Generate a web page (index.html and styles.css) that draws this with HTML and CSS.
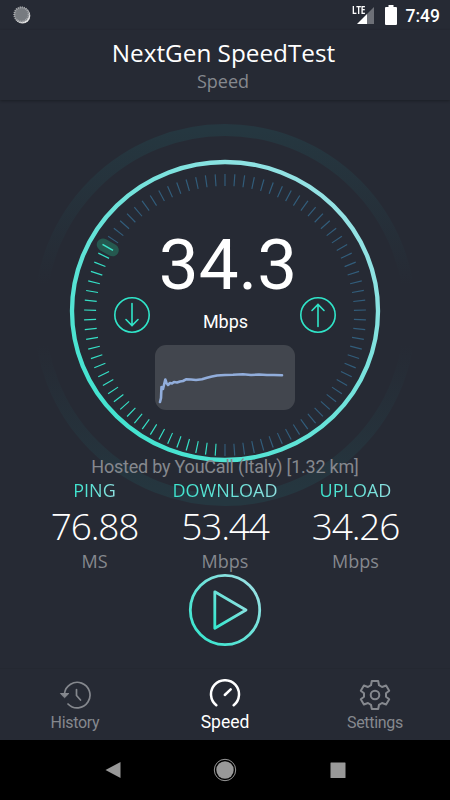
FILE: index.html
```html
<!DOCTYPE html>
<html lang="en">
<head>
    <meta charset="UTF-8">
    <meta name="viewport" content="width=device-width, initial-scale=1.0">
    <title>NextGen SpeedTest</title>
    <link rel="stylesheet" href="styles.css">
</head>
<body>
    <!-- Status bar -->
    <div class="status-bar">
        <svg class="sync" width="18" height="18" viewBox="0 0 18 18">
            <circle cx="9.5" cy="9.7" r="7.8" fill="#e4e4e4"/>
            <circle cx="8.5" cy="8.5" r="7.6" fill="#777b80"/>
            <circle cx="8.5" cy="8.5" r="7.2" fill="none" stroke="#a9abae" stroke-width="2" stroke-dasharray="1 1"/>
        </svg>
        <div class="status-right">
            <div class="signal">
                <span class="lte">LTE</span>
                <svg width="17" height="17" viewBox="0 0 17 17">
                    <path d="M17 0V17H10V7z" fill="#6d7077"/>
                    <path d="M10 7V17H0z" fill="#fff"/>
                </svg>
            </div>
            <svg class="battery" width="12" height="20" viewBox="0 0 12 20">
                <path d="M3.5 0h5v2H11q1 0 1 1v16q0 1-1 1H1q-1 0-1-1V3q0-1 1-1h2.500z" fill="#fff"/>
            </svg>
            <span class="clock">7:49</span>
        </div>
    </div>

    <!-- Title -->
    <header class="header">
        <h1>NextGen SpeedTest</h1>
        <p>Speed</p>
    </header>

    <main class="main">
        <!-- Gauge -->
        <div class="gauge">
            <svg class="dial" width="450" height="420" viewBox="0 100 450 420">
                <defs>
                    <linearGradient id="ringColor" x1="0.1" y1="0.85" x2="0.8" y2="0.1">
                        <stop offset="0" stop-color="#42e3cf"/>
                        <stop offset="1" stop-color="#94e2e4"/>
                    </linearGradient>
                    <linearGradient id="haloColor" x1="0" y1="0" x2="0" y2="1">
                        <stop offset="0" stop-color="#253740"/>
                        <stop offset="0.42" stop-color="#253740" stop-opacity="0"/>
                        <stop offset="0.58" stop-color="#253740" stop-opacity="0"/>
                        <stop offset="1" stop-color="#253740"/>
                    </linearGradient>
                </defs>
                <circle cx="225" cy="315" r="185" fill="none" stroke="url(#haloColor)" stroke-width="12"/>
                <ellipse cx="225" cy="311" rx="153" ry="149" fill="none" stroke="url(#ringColor)" stroke-width="4.300"/>
                <path d="M112.750 239.990A135 135 0 1 1 224.410 450" pathLength="236.500" class="ticks"/>
                <path d="M216.170 449.710A135 135 0 0 1 108.390 246.990" pathLength="116.500" class="ticks active"/>
                <path d="M103 244.700L112.500 250.100" stroke="#25584f" stroke-width="12.500" stroke-linecap="round"/>
                <path d="M102.500 244.300L113 250.300" stroke="#3de5cb" stroke-width="1.500"/>
            </svg>
            <div class="reading">
                <div class="value">34.3</div>
                <div class="unit-row">
                    <svg width="36" height="36" viewBox="0 0 36 36" class="arrow">
                        <circle cx="18" cy="18" r="17.200"/>
                        <path d="M18 6.500V28.500M12 22.500L18 28.500L24 22.500"/>
                    </svg>
                    <span>Mbps</span>
                    <svg width="36" height="36" viewBox="0 0 36 36" class="arrow">
                        <circle cx="18" cy="18" r="17.200"/>
                        <path d="M18 29.500V7.500M12 13.500L18 7.500L24 13.500"/>
                    </svg>
                </div>
                <svg class="chart" width="140" height="65" viewBox="0 0 140 65">
                    <path d="M5 57L6 53L6.500 42L8 44L10.300 34.500L11.500 38L13 40L15 38L17 38.500L19 37L22 37.500L25 36.500L28 36L31 34.300L36 34.500L41 35L47 34.300L52 32.800L57 31.500L62 30.500L70 30L78 29.800L88 29.300L96 30L104 29.500L112 30L119 30L127 30.300"/>
                </svg>
            </div>
        </div>

        <p class="host">Hosted by YouCall (Italy) [1.32 km]</p>

        <!-- Results -->
        <div class="results">
            <div class="result">
                <span class="label">PING</span>
                <span class="number">76.88</span>
                <span class="unit">MS</span>
            </div>
            <div class="result">
                <span class="label">DOWNLOAD</span>
                <span class="number">53.44</span>
                <span class="unit">Mbps</span>
            </div>
            <div class="result">
                <span class="label">UPLOAD</span>
                <span class="number">34.26</span>
                <span class="unit">Mbps</span>
            </div>
        </div>

        <svg class="play" width="74" height="74" viewBox="0 0 74 74">
            <defs>
                <linearGradient id="playColor" x1="0" y1="1" x2="1" y2="0">
                    <stop offset="0.1" stop-color="#3ae6cf"/>
                    <stop offset="0.9" stop-color="#98e0e3"/>
                </linearGradient>
            </defs>
            <circle cx="37" cy="37" r="34.700"/>
            <path d="M26.800 18.800L58 37L26.800 55.200z"/>
        </svg>
    </main>

    <!-- Tabs -->
    <nav class="tabs">
        <div class="tab">
            <svg width="32" height="32" viewBox="0 0 32 32">
                <path d="M5.500 14.500A12.800 12.800 0 1 1 9 25" stroke-width="1.700"/>
                <path d="M1.800 14.500H9.800L5.800 18.500z" class="solid"/>
                <path d="M17.500 10.500V16.500L21.500 21" stroke-width="1.700"/>
            </svg>
            <span>History</span>
        </div>
        <div class="tab selected">
            <svg width="32" height="32" viewBox="0 0 32 32">
                <path d="M7.300 26.200A14 14 0 1 1 24.700 26.200" stroke-width="2.500"/>
                <path d="M15.800 16L21.700 10.300" stroke-width="2.500"/>
            </svg>
            <span>Speed</span>
        </div>
        <div class="tab">
            <svg width="32" height="32" viewBox="0 0 32 32">
                <path d="M12.800 2H19.200L20 6.200L23 8L27.100 6.500L30.200 11.700L27 14.300V17.700L30.200 20.300L27.100 25.500L23 24L20 25.800L19.200 30H12.800L12 25.800L9 24L4.900 25.500L1.800 20.300L5 17.700V14.300L1.800 11.700L4.900 6.500L9 8L12 6.200z" stroke-width="2"/>
                <circle cx="16" cy="16" r="4.300" stroke-width="2"/>
            </svg>
            <span>Settings</span>
        </div>
    </nav>

    <!-- Android buttons -->
    <div class="android-bar">
        <svg width="24" height="24" viewBox="0 0 24 24"><path d="M4.500 12L19.500 4V20z"/></svg>
        <svg width="24" height="24" viewBox="0 0 24 24">
            <circle cx="12" cy="12" r="8.700"/>
            <circle cx="12" cy="12" r="10.700" class="outline"/>
        </svg>
        <svg width="24" height="24" viewBox="0 0 24 24"><rect x="4.500" y="4.500" width="15" height="15.500" rx=".5"/></svg>
    </div>
</body>
</html>
```
FILE: styles.css
```css
* {
    box-sizing: border-box;
}

body {
    margin: 0;
    width: 450px;
    height: 800px;
    display: flex;
    flex-direction: column;
    overflow: hidden;
    background-color: #262a34;
    color: #fff;
    font-family: "Open Sans", sans-serif;
}

h1, p {
    margin: 0;
    font-weight: normal;
}

svg {
    display: block;
}

.status-bar {
    display: flex;
    justify-content: space-between;
    align-items: flex-start;
    height: 30px;
    padding: 0 10px 0 13px;
}

.sync {
    margin-top: 6px;
}

.status-right {
    display: flex;
}

.signal {
    position: relative;
    padding-top: 7px;
}

.lte {
    position: absolute;
    left: -5px;
    top: 5px;
    font: bold 11px/10px "Open Sans", sans-serif;
    letter-spacing: -0.5px;
    transform: scaleX(0.75);
    transform-origin: left;
}

.battery {
    margin: 5px 9px 0 11px;
}

.clock {
    font: 500 17.5px/32px Roboto, sans-serif;
}

.header {
    height: 70px;
    flex: none;
    padding: 7px 3px 0 0;
    text-align: center;
    box-shadow: 0 1px 3px rgba(0, 0, 0, 0.3);
}

.header h1 {
    font-size: 24.3px;
    line-height: 32px;
}

.header p {
    font-size: 18px;
    line-height: 24px;
    padding-right: 1px;
    color: #85888e;
}

.main {
    flex: 1;
    display: flex;
    flex-direction: column;
    align-items: center;
}

/* dial and reading share one grid cell */
.gauge {
    display: grid;
    width: 450px;
    height: 356px;
}

.dial {
    grid-area: 1 / 1;
}

.reading {
    grid-area: 1 / 1;
    display: flex;
    flex-direction: column;
    align-items: center;
    padding-top: 133px;
}

.ticks {
    fill: none;
    stroke: #325d7b;
    stroke-width: 12;
    stroke-dasharray: 0.5 3.5;
}

.ticks.active {
    stroke: #35e0c6;
}

.value {
    font: 71px/64px Roboto, sans-serif;
    padding-left: 6px;
}

.unit-row {
    display: flex;
    justify-content: space-between;
    width: 223px;
    height: 36px;
}

.unit-row span {
    font: 18px/24px Roboto, sans-serif;
    padding: 13px 0 0 1px;
}

.arrow {
    fill: none;
    stroke: #30e5c9;
    stroke-width: 1.6;
    stroke-linecap: round;
}

.chart {
    margin-top: 12px;
    border-radius: 11px;
    background-color: #42464e;
    fill: none;
    stroke: #91addb;
    stroke-width: 2.6;
    stroke-linecap: round;
    stroke-linejoin: round;
}

.host {
    position: relative;
    font: 18px/21px Roboto, sans-serif;
    letter-spacing: -0.22px;
    color: #85888e;
}

.results {
    position: relative;
    display: grid;
    grid-template-columns: repeat(3, 130.5px);
    height: 96px;
}

.result {
    display: flex;
    flex-direction: column;
    align-items: center;
}

.label {
    font-size: 18px;
    line-height: 26px;
    background: linear-gradient(90deg, #3ae6cf, #8fe0e0);
    -webkit-background-clip: text;
    background-clip: text;
    color: transparent;
}

.number {
    font: 300 37px/46px "Open Sans", sans-serif;
    letter-spacing: -1.2px;
}

.unit {
    font-size: 18px;
    line-height: 24px;
    color: #85888e;
}

.play {
    fill: none;
    stroke: url(#playColor);
    stroke-width: 2.8;
    stroke-linejoin: round;
}

.tabs {
    flex: none;
    display: grid;
    grid-template-columns: repeat(3, 1fr);
    height: 72px;
    border-top: 1px solid #242831;
    font-family: Roboto, sans-serif;
}

.tab {
    display: flex;
    flex-direction: column;
    align-items: center;
    padding-top: 10px;
    color: #85888e;
    font-size: 16px;
    line-height: 23px;
    letter-spacing: -0.3px;
}

.tab svg {
    fill: none;
    stroke: currentColor;
    stroke-linecap: round;
    stroke-linejoin: round;
}

.tab .solid {
    fill: currentColor;
}

.tab.selected {
    color: #fff;
    font-size: 17.5px;
    letter-spacing: 0;
}

.android-bar {
    flex: none;
    display: grid;
    grid-template-columns: repeat(3, 112.5px);
    justify-content: center;
    justify-items: center;
    align-items: center;
    height: 60px;
    background-color: #000;
    fill: #999;
}

.android-bar .outline {
    fill: none;
    stroke: #999;
}
```
